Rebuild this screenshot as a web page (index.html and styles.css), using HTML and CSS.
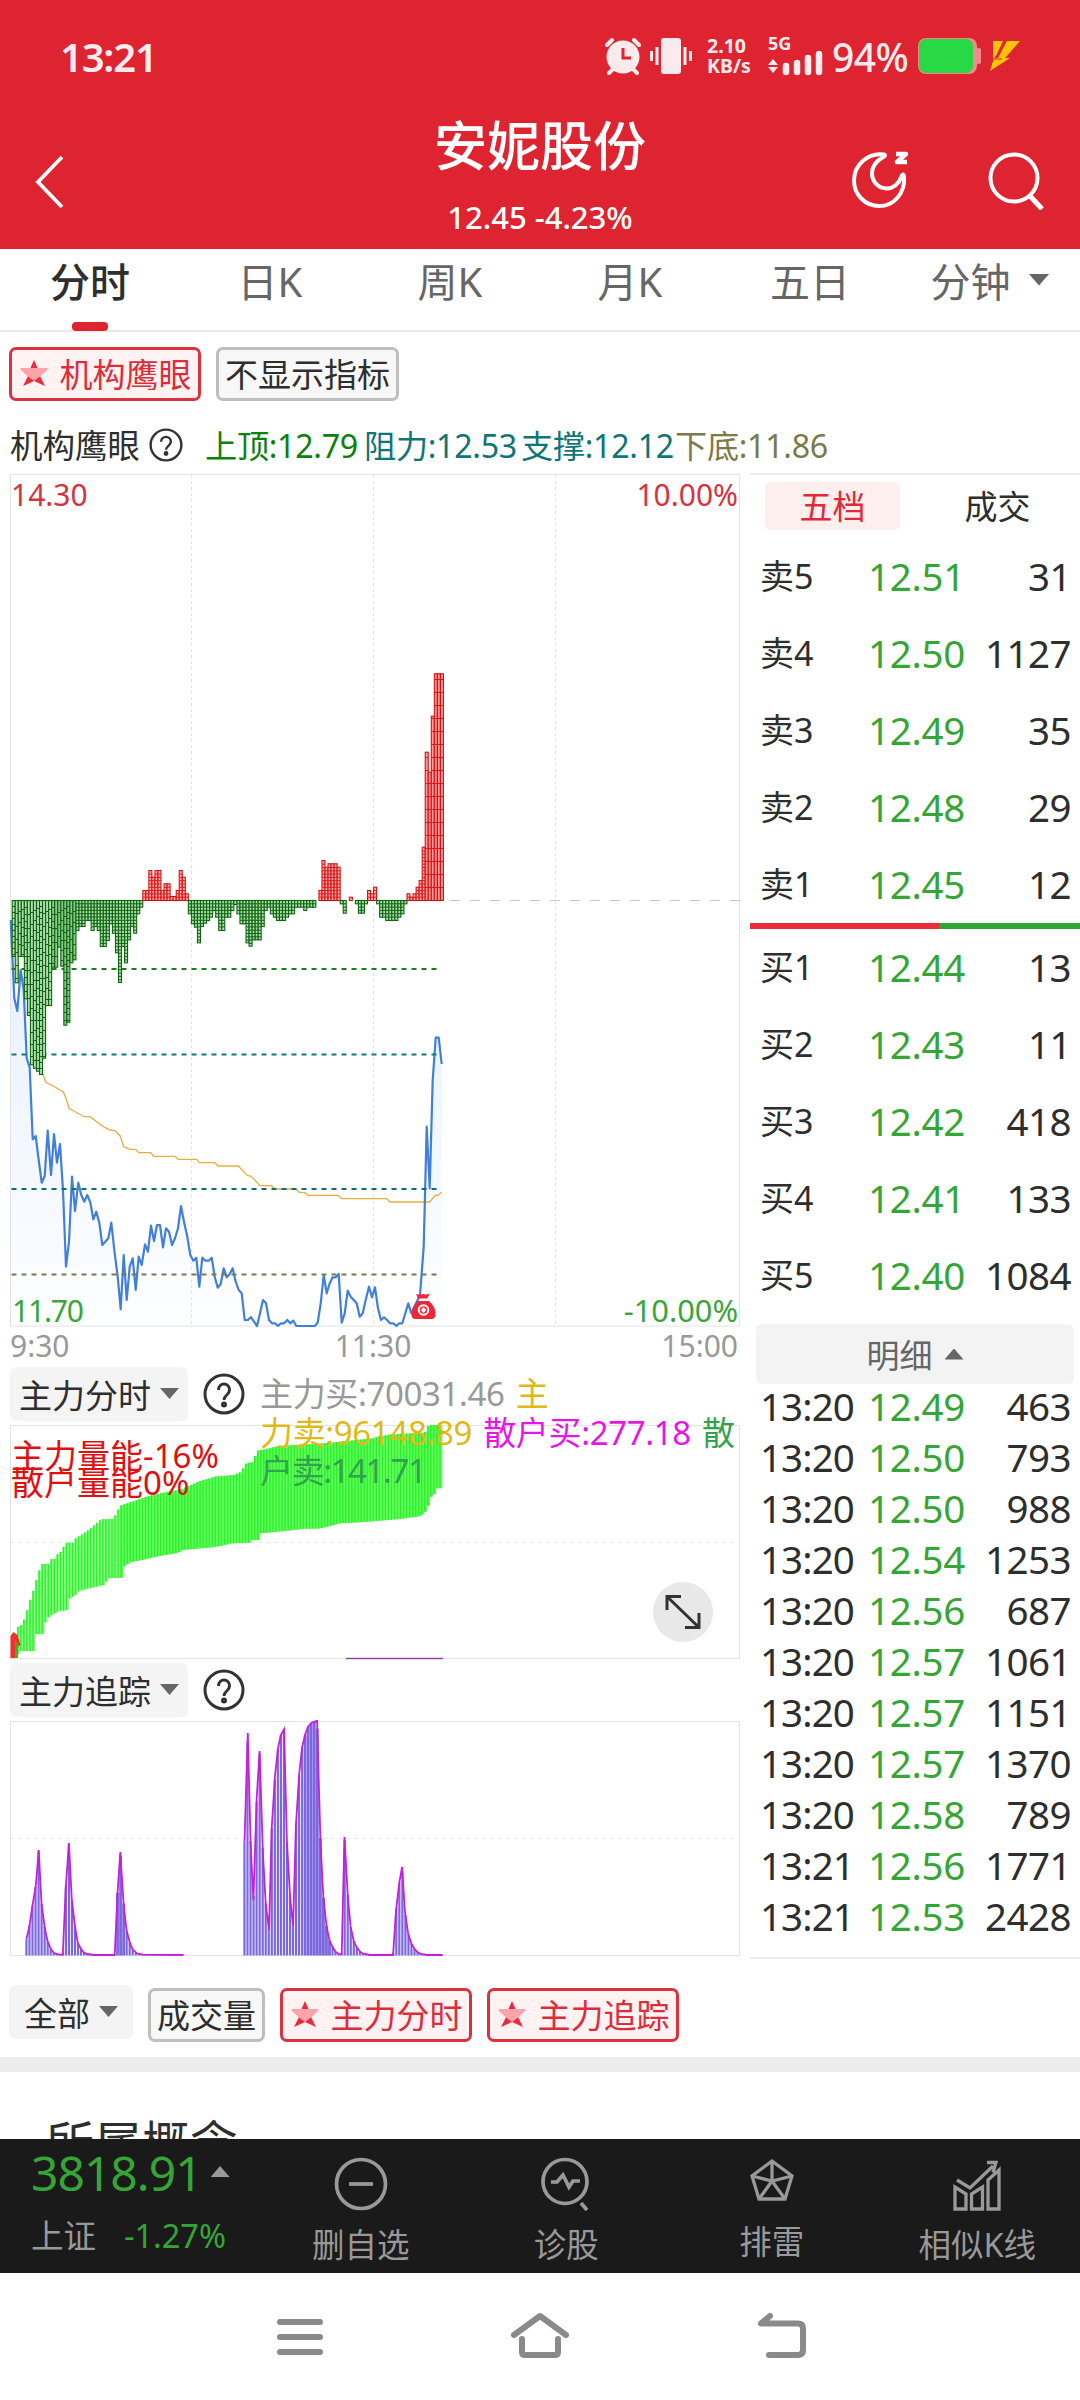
FILE: index.html
```html
<!DOCTYPE html>
<html lang="zh-CN">
<head>
<meta charset="utf-8">
<title>安妮股份</title>
<link rel="stylesheet" href="styles.css">
</head>
<body>
<header class="header">
  <div class="status">
    <span class="clock">13:21</span>
    <div class="status-icons">
      <svg class="s-alarm" width="38" height="38" viewBox="0 0 38 38"><g fill="none" stroke="#fcebec" stroke-width="4" stroke-linecap="round"><path d="M3 8l5-5M35 8l-5-5M5 36l4-4M33 36l-4-4"/></g><circle cx="19" cy="20" r="16.5" fill="#fcebec"/><path d="M19 11v10h8" fill="none" stroke="#dd2430" stroke-width="3"/></svg>
      <svg class="s-vibe" width="42" height="36" viewBox="0 0 42 36"><rect x="11" width="20" height="36" rx="3" fill="#fcebec"/><path d="M1.5 13v10M7 9v18M35 9v18M40.500 13v10" stroke="#fcebec" stroke-width="3"/></svg>
      <div class="speed"><span>2.10</span><span>KB/s</span></div>
      <div class="s-signal"><span class="fiveg">5G</span><svg width="56" height="25" viewBox="0 14 56 25"><path d="M0 28l5-6 5 6zM0 30l5 6 5-6z" fill="#fcebec"/><path d="M18 29v6M29 26v9M40 21v14M51 17v18" stroke="#fcebec" stroke-width="6.500" stroke-linecap="round"/></svg></div>
      <span class="pct">94%</span>
      <svg class="s-batt" width="63" height="36" viewBox="0 0 63 36"><rect width="59" height="36" rx="8" fill="#f08a90"/><rect x="58" y="10" width="5" height="16" rx="2" fill="#f08a90"/><rect x="1" y="1" width="54" height="34" rx="7" fill="#2ad846"/></svg>
      <svg class="s-bolt" width="30" height="30" viewBox="0 0 30 30"><path d="M3 0h10L6 15l-3 3zM17 0h13L15 17h5L0 30l4-13h4z" fill="#fdc309"/><path d="M2 18h10" stroke="#dd2430"/></svg>
    </div>
  </div>
  <div class="titlebar">
    <svg class="back" width="30" height="56" viewBox="0 0 30 56"><path d="M28 3L4 28l24 25" fill="none" stroke="#fff" stroke-width="3.800"/></svg>
    <div class="title"><h1>安妮股份</h1><p>12.45 -4.23%</p></div>
    <div class="actions">
      <svg width="60" height="60" viewBox="0 0 60 60"><path d="M34 4.500C18 2 4 15 4 30.500c0 14 11 25.500 25 25.500 15 0 26.500-13 25-29.500-.5-3-2-2-2.500 0C49 34 43 38.500 37 38.500c-9 0-15-7-15-15.500 0-7 4-12 12-16.500 1.500-1 1.200-1.800 0-2z" fill="none" stroke="#fff" stroke-width="4"/><path d="M46 4h10l-9 8h10" fill="none" stroke="#fff" stroke-width="4.500" stroke-linejoin="round"/></svg>
      <svg width="60" height="60" viewBox="0 0 60 60"><circle cx="28" cy="28" r="23.500" fill="none" stroke="#fff" stroke-width="4"/><path d="M44 46l12 13" stroke="#fff" stroke-width="5"/></svg>
    </div>
  </div>
</header>

<nav class="tabs">
  <span class="tab active">分时</span><span class="tab">日K</span><span class="tab">周K</span><span class="tab">月K</span><span class="tab">五日</span><span class="tab">分钟<i class="caret big"></i></span>
</nav>

<div class="chips top">
  <span class="chip on"><svg class="star" viewBox="0 0 28 28"><path d="M14 1l4 9h9l-7 7 5 10-11-5-11 5 5-10-7-7h9z" fill="#ed2a3a"/><path d="M1 9h26q1.500 1-1 3l-6 5.500-6 4.500-6-4.500L2 12Q-.5 10 1 9z" fill="#ffa3ab"/></svg>机构鹰眼</span>
  <span class="chip wide">不显示指标</span>
</div>

<div class="levels">
  <span class="name">机构鹰眼</span>
  <svg class="q" width="34" height="34" viewBox="0 0 42 42"><circle cx="21" cy="21" r="19" /><path d="M15 17c0-8 12-8 12 0 0 5-6 5-6 10"/><circle class="dot" cx="21" cy="31.500" r="1.500"/></svg>
  <span class="lv green">上顶:12.79</span><span class="lv teal">阻力:12.53</span><span class="lv teal">支撑:12.12</span><span class="lv olive">下底:11.86</span>
</div>

<main class="board">
  <section class="charts">
    <svg id="price" width="740" height="894" viewBox="0 473 740 894"></svg>
    <div class="selrow">
      <span class="select">主力分时<i class="caret"></i></span>
      <svg class="q" width="42" height="42" viewBox="0 0 42 42"><circle cx="21" cy="21" r="19"/><path d="M15.500 17c0-8 11-8 11 0 0 5-5.500 5-5.500 10"/><circle class="dot" cx="21" cy="31.500" r="1.500"/></svg>
      <div class="legend">
        <div><span class="gray">主力买:70031.46</span> <span class="gold">主</span></div>
        <div><span class="gold">力卖:96148.89</span> <span class="pink">散户买:277.18</span> <span class="leaf">散</span></div>
        <div><span class="leaf narrow">户卖:141.71</span></div>
      </div>
    </div>
    <div class="plot">
      <svg id="flow" width="740" height="242" viewBox="0 1421 740 242"></svg>
      <div class="energy"><div>主力量能-16%</div><div>散户量能0%</div></div>
      <div class="expand"><svg width="60" height="60" viewBox="0 0 60 60"><path d="M14 28V14.500h14M14 14.500l32 31M46 31v14.500H32" fill="none" stroke="#333" stroke-width="3"/></svg></div>
    </div>
    <div class="selrow">
      <span class="select">主力追踪<i class="caret"></i></span>
      <svg class="q" width="42" height="42" viewBox="0 0 42 42"><circle cx="21" cy="21" r="19"/><path d="M15.500 17c0-8 11-8 11 0 0 5-5.500 5-5.500 10"/><circle class="dot" cx="21" cy="31.500" r="1.500"/></svg>
    </div>
    <svg id="track" width="740" height="242" viewBox="0 1717 740 242"></svg>
  </section>

  <aside class="side">
    <div class="sidetabs"><span class="st active">五档</span><span class="st">成交</span></div>
    <div class="book">
      <div class="row"><b>卖5</b><em>12.51</em><i>31</i></div>
      <div class="row"><b>卖4</b><em>12.50</em><i>1127</i></div>
      <div class="row"><b>卖3</b><em>12.49</em><i>35</i></div>
      <div class="row"><b>卖2</b><em>12.48</em><i>29</i></div>
      <div class="row"><b>卖1</b><em>12.45</em><i>12</i></div>
    </div>
    <div class="ratio"><span></span></div>
    <div class="book">
      <div class="row"><b>买1</b><em>12.44</em><i>13</i></div>
      <div class="row"><b>买2</b><em>12.43</em><i>11</i></div>
      <div class="row"><b>买3</b><em>12.42</em><i>418</i></div>
      <div class="row"><b>买4</b><em>12.41</em><i>133</i></div>
      <div class="row"><b>买5</b><em>12.40</em><i>1084</i></div>
    </div>
    <div class="detail">明细<i class="caret up"></i></div>
    <div class="ticks">
      <div class="row"><b>13:20</b><em>12.49</em><i>463</i></div>
      <div class="row"><b>13:20</b><em>12.50</em><i>793</i></div>
      <div class="row"><b>13:20</b><em>12.50</em><i>988</i></div>
      <div class="row"><b>13:20</b><em>12.54</em><i>1253</i></div>
      <div class="row"><b>13:20</b><em>12.56</em><i>687</i></div>
      <div class="row"><b>13:20</b><em>12.57</em><i>1061</i></div>
      <div class="row"><b>13:20</b><em>12.57</em><i>1151</i></div>
      <div class="row"><b>13:20</b><em>12.57</em><i>1370</i></div>
      <div class="row"><b>13:20</b><em>12.58</em><i>789</i></div>
      <div class="row"><b>13:21</b><em>12.56</em><i>1771</i></div>
      <div class="row"><b>13:21</b><em>12.53</em><i>2428</i></div>
    </div>
  </aside>
</main>

<div class="chips bottom">
  <span class="select small">全部<i class="caret"></i></span>
  <span class="chip vol">成交量</span>
  <span class="chip on"><svg class="star" viewBox="0 0 28 28"><path d="M14 1l4 9h9l-7 7 5 10-11-5-11 5 5-10-7-7h9z" fill="#ed2a3a"/><path d="M1 9h26q1.500 1-1 3l-6 5.500-6 4.500-6-4.500L2 12Q-.5 10 1 9z" fill="#ffa3ab"/></svg>主力分时</span>
  <span class="chip on"><svg class="star" viewBox="0 0 28 28"><path d="M14 1l4 9h9l-7 7 5 10-11-5-11 5 5-10-7-7h9z" fill="#ed2a3a"/><path d="M1 9h26q1.500 1-1 3l-6 5.500-6 4.500-6-4.500L2 12Q-.5 10 1 9z" fill="#ffa3ab"/></svg>主力追踪</span>
</div>
<div class="divider"></div>
<div class="concept">所属概念</div>

<footer class="toolbar">
  <div class="index">
    <div class="idx-top">3818.91<i class="caret up light"></i></div>
    <div class="idx-sub"><span>上证</span><span class="chg">-1.27%</span></div>
  </div>
  <div class="tool"><svg width="54" height="54" viewBox="0 0 54 54"><circle cx="27" cy="27" r="24.500"/><path d="M15 27h24"/></svg><span>删自选</span></div>
  <div class="tool"><svg width="54" height="54" viewBox="0 0 54 54"><circle cx="26" cy="24.500" r="22"/><path d="M12 25h6l6-7 6 12 4-6h7M42 46l6 7"/></svg><span>诊股</span></div>
  <div class="tool high"><svg width="54" height="54" viewBox="0 0 54 54"><path d="M27 7L47 22l-7 23H14L7 22zM27 7v20M7 22l20 5 20-5M14 45l13-18 13 18" stroke-width="3.300"/></svg><span>排雷</span></div>
  <div class="tool"><svg width="54" height="54" viewBox="0 0 54 54"><path d="M5 52V30l11 7v15zM21.500 52V37l11-7v22zM38 52V23l11-10v39zM7 23l13 8L43 9M37 5.500h9l-3 10" stroke-width="3.300"/></svg><span>相似K线</span></div>
</footer>
<div class="sysnav">
  <svg width="48" height="44" viewBox="0 0 48 44"><path d="M4 10h40M4 25h40M4 40h40"/></svg>
  <svg width="60" height="48" viewBox="0 0 60 48"><path d="M4 23L30 4l26 19"/><path d="M12 27v13q0 3 3 3h30q3 0 3-3V27"/></svg>
  <svg width="50" height="48" viewBox="0 0 50 48"><path d="M14 4L5 11.500H42q5 0 5 5V38q0 5-5 5H13"/></svg>
</div>
<script src="charts.js"></script>
</body>
</html>
```
FILE: styles.css
```css
* { box-sizing: border-box; margin: 0; padding: 0; }
body { width: 1080px; height: 2400px; overflow: hidden; background: #fff; color: #2e2e2e; font-family: "Noto Sans", "Noto Sans CJK SC", sans-serif; font-size: 33px; }
svg { display: block; flex: none; }
i, em { font-style: normal; }
b { font-weight: 400; }

.header { height: 249px; background: #dd2430; color: #fff; }
.status { height: 112px; display: flex; justify-content: space-between; padding: 0 60px 0 60px; align-items: center; }
.clock { font-size: 40px; font-weight: 600; letter-spacing: -1.200px; color: #fcebec; }
.status-icons { display: flex; align-items: center; color: #fcebec; }
.s-vibe { margin-left: 8px; }
.speed { display: flex; flex-direction: column; margin-left: 15px; width: 46px; font-size: 19.500px; font-weight: 700; line-height: 20px; }
.s-signal { margin-left: 15px; width: 56px; padding-bottom: 2px; }
.fiveg { display: block; height: 17px; font-size: 18px; font-weight: 700; line-height: 19px; }
.pct { width: 80px; margin-left: 8px; font-size: 39px; font-weight: 500; letter-spacing: -0.500px; color: #fcebec; }
.s-batt { margin-left: 6px; }
.s-bolt { margin-left: 9px; }
.titlebar { height: 137px; display: grid; grid-template-columns: 300px 1fr 300px; }
.back { margin: 42px 0 0 34px; }
.title { text-align: center; }
.title h1 { font-size: 53px; font-weight: 500; line-height: 68px; }
.title p { font-size: 31px; font-weight: 500; line-height: 40px; margin-top: 17px; }
.actions { display: flex; gap: 76px; padding: 38px 0 0 70px; }

.tabs { height: 83px; display: grid; grid-template-columns: repeat(6, 180px); border-bottom: 2px solid #e9e9e9; }
.tab { height: 82px; display: flex; justify-content: center; align-items: center; padding-bottom: 21px; font-size: 40px; color: #666; position: relative; }
.tab.active { color: #2e2e2e; font-weight: 500; }
.tab.active::after { content: ""; position: absolute; left: 72px; bottom: 0; width: 36px; height: 9px; border-radius: 4px; background: #dd2430; }
.caret { width: 19px; height: 11px; background: #666; clip-path: polygon(0 0, 100% 0, 50% 100%); margin-left: 9px; flex: none; }
.caret.big { width: 21px; height: 12px; margin-left: 18px; }
.caret.up { clip-path: polygon(50% 0, 100% 100%, 0 100%); }

.chips { display: flex; padding-left: 9px; gap: 15px; }
.chips.top { height: 84px; padding-top: 15px; }
.chip { height: 54px; border: 3px solid #bebebe; border-radius: 7px; background: #f8f8f8; display: flex; align-items: center; justify-content: center; font-size: 33px; white-space: nowrap; padding-bottom: 2px; }
.chip.on { width: 192px; border-color: #d9333f; background: #fff2f3; color: #dc2d3a; gap: 12px; padding-left: 1px; }
.chip.wide { width: 183px; }
.chip.vol { width: 117px; }
.star { width: 28px; height: 28px; }

.levels { height: 57px; display: flex; align-items: center; padding-left: 10px; font-size: 32.500px; }
.levels > span { margin-top: -2px; }
.name { width: 139px; flex: none; }
.q { fill: none; stroke: #333; stroke-width: 3; }
.q .dot { fill: #333; }
.lv { width: 157px; letter-spacing: -0.300px; white-space: nowrap; font-size: 32.200px; }
.levels .green { margin-left: 22px; width: 159px; }
.green { color: #0a820a; }
.teal { color: #107575; }
.levels .teal + .teal { width: 154px; }
.olive { color: #7b7a48; }

.board { display: grid; grid-template-columns: 740px 330px; column-gap: 10px; height: 1485px; }
.selrow { height: 54px; display: flex; align-items: center; padding-left: 10px; position: relative; }
.select { width: 178px; height: 54px; border-radius: 7px; background: #f4f4f4; display: flex; align-items: center; justify-content: center; font-size: 33px; padding-bottom: 1px; }
.selrow .q { margin-left: 15px; }
.select.small { width: 124px; }
.legend { position: absolute; left: 260px; top: 8px; z-index: 2; font-size: 33px; line-height: 38.500px; white-space: nowrap; word-spacing: 3px; letter-spacing: -0.350px; }
.gray { color: #999; }
.gold { color: #dfba16; }
.pink { color: #e617e6; }
.leaf { color: #31a34e; }
.narrow { letter-spacing: -1.400px; }
.plot { position: relative; }
.energy { position: absolute; left: 11px; top: 21px; font-size: 33px; line-height: 27px; color: #e01010; white-space: nowrap; }
.expand { position: absolute; left: 653px; top: 161px; width: 60px; height: 60px; border-radius: 50%; background: #e8e8e8; }

.side { border-top: 2px solid #ececec; border-bottom: 2px solid #ececec; }
.sidetabs { height: 63px; display: flex; padding: 7px 15px 0; gap: 30px; }
.st { width: 135px; height: 48px; border-radius: 6px; text-align: center; line-height: 50px; font-size: 33px; }
.st.active { background: #fdefed; color: #e2293a; }
.row { display: grid; grid-template-columns: 108px 98px 1fr; padding: 0 9px 0 10px; font-size: 38.500px; }
.row em { color: #35a635; letter-spacing: -0.300px; }
.row i { text-align: right; letter-spacing: -0.500px; }
.book .row { height: 77px; line-height: 77px; }
.book b { font-size: 34px; }
.ratio { height: 6px; background: #2fa737; }
.ratio span { display: block; width: 189px; height: 6px; background: #ee2b38; }
.detail { margin: 10px 6px 0; height: 60px; border-radius: 6px; background: #f3f3f3; color: #666; display: flex; align-items: center; justify-content: center; font-size: 33px; }
.detail .caret { margin-left: 12px; }
.ticks .row { height: 51px; line-height: 50px; }
.ticks .row b { letter-spacing: -0.900px; }
.ticks { margin-top: -3px; }

.chips.bottom { height: 99px; padding-top: 30px; align-items: flex-start; }
.chips.bottom .select { margin-top: -3px; }
.divider { height: 15px; background: #ececec; }
.concept { height: 67px; overflow: hidden; padding: 36px 0 0 46px; font-size: 48px; line-height: 70px; }

.toolbar { height: 134px; background: #1a1a1a; display: grid; grid-template-columns: 258px repeat(4, 205.500px); color: #999; }
.idx-top { color: #35a635; font-size: 48px; line-height: 62px; padding: 3px 0 0 31px; display: flex; letter-spacing: -1px; }
.caret.light { background: #999; margin: 24px 0 0 9px; }
.idx-sub { display: flex; padding: 12px 0 0 31px; font-size: 32.500px; line-height: 40px; gap: 28px; }
.chg { color: #35a635; }
.tool { display: flex; flex-direction: column; align-items: center; padding-top: 18px; font-size: 32.500px; line-height: 40px; }
.tool svg { fill: none; stroke: #999; stroke-width: 3.700; margin-bottom: 14px; }
.tool.high { padding-top: 15px; }
.sysnav { height: 127px; display: flex; justify-content: center; align-items: flex-start; padding: 39px 0 0 2px; gap: 186px; }
.sysnav svg { fill: none; stroke: #8a8a8a; stroke-width: 6; stroke-linecap: round; stroke-linejoin: round; }

#price, #flow, #track { font-family: "Noto Sans", sans-serif; font-size: 30px; }
```
FILE: charts.js
```js
const STEP = 3.037, X0 = 12.2;
const make = (id, markup) => { document.getElementById(id).innerHTML = markup; };
const pairs = s => s.trim().split(/\s+/).map(p => p.split(',').map(Number));
const interp = (pts, x) => {
  for (let i = 1; i < pts.length; i++) {
    if (x <= pts[i][0]) {
      const [a, b] = pts[i - 1], [c, d] = pts[i];
      return b + (d - b) * Math.max(0, x - a) / (c - a || 1);
    }
  }
  return pts[pts.length - 1][1];
};

/* Intraday price panel */
const toPx = s => pairs(s).map(([x, y]) => (x / 3).toFixed(1) + ',' + (880 + y / 3).toFixed(1)).join(' ');
const price = toPx(`32,120 43,355 52,393 62,270 71,330 80,535 89,562 98,778 107,768 116,840 125,908 134,888 143,752 153,885 162,762 171,848 180,792 189,930 198,1160 207,1085 216,890 225,993 235,908 244,945 253,965 262,945 271,967 280,1018 289,995 298,1028 307,1095 316,1085 325,1075 334,1028 344,1120 353,1190 362,1288 371,1125 380,1260 389,1160 398,1135 407,1230 416,1130 425,1155 435,1093 444,1115 453,1037 462,1083 471,1035 480,1035 489,1102 498,1045 507,1055 516,1095 525,1075 534,1045 543,978 552,1025 562,1070 571,1125 580,1142 589,1133 598,1220 607,1133 616,1142 626,1142 635,1133 644,1190 653,1223 662,1212 671,1165 680,1192 689,1182 698,1165 707,1205 716,1230 725,1240 734,1320 744,1320 753,1311 762,1325 771,1338 780,1300 789,1260 798,1270 807,1320 816,1330 825,1330 834,1338 843,1330 852,1330 862,1320 871,1330 880,1322 889,1338 944,1338 953,1328 962,1270 971,1185 980,1240 989,1210 998,1192 1007,1192 1016,1182 1025,1328 1034,1300 1043,1232 1052,1250 1061,1260 1070,1270 1079,1310 1088,1300 1097,1260 1107,1220 1116,1252 1125,1222 1134,1285 1143,1320 1152,1312 1161,1320 1170,1330 1180,1330 1189,1338 1198,1330 1207,1330 1216,1300 1225,1270 1234,1300 1260,1245 1271,1100 1280,740 1289,925 1298,600 1307,473 1316,473 1325,552`);
const average = toPx(`32,120 60,297 72,298 100,400 128,580 137,607 160,618 180,630 190,635 198,655 207,685 220,692 253,710 270,710 307,738 330,750 345,752 360,767 371,800 390,808 407,808 416,818 452,818 462,829 525,829 535,838 590,838 598,848 645,848 654,858 715,858 743,887 753,888 780,917 815,917 825,927 888,927 898,937 915,938 925,946 1015,946 1025,956 1160,956 1170,966 1289,966 1305,947 1316,945 1325,937`);
/* positive = buying bar, negative = selling bar, one per minute, in thirds of a pixel */
const force = [-168,-247,-168,-168,-295,-345,-493,-503,-512,-522,-473,-315,-315,-200,-200,-140,-197,-374,-365,-187,-178,-90,-78,-78,-60,-60,-90,-78,-90,-138,-138,-120,-70,-98,-157,-246,-138,-187,-118,-78,-98,-40,-20,
30,30,90,70,90,90,30,50,50,12,12,30,90,70,20,
-40,-70,-80,-127,-78,-68,-60,-50,-30,-50,-90,-90,-50,-50,-30,-12,-40,-70,-70,-127,-137,-118,-118,-118,-78,-30,-20,-40,-50,-60,-60,-60,-50,-40,-40,-20,-20,-20,-30,-20,-20,-20,0,
30,120,100,110,110,110,100,-10,-38,0,10,0,-10,-38,-38,-10,30,20,40,-10,-50,-50,-60,-60,-60,-60,-50,-40,-10,20,10,20,40,60,160,445,385,553,680,680,680];
let bars = '';
force.forEach((v, k) => {
  if (!v) return;
  const x = X0 + k * STEP, h = Math.abs(v) / 3, up = v > 0;
  const y = up ? 900.5 - h : 900.5;
  const fill = up ? (h > 100 ? '#ff9a9a' : '#ffb0b0') : (k > 12 && k < 21 ? '#8cc68c' : '#b4dab4');
  bars += `<rect x="${x.toFixed(2)}" y="${y.toFixed(1)}" width="3" height="${h.toFixed(1)}" fill="${fill}" stroke="${up ? '#cc1414' : '#0b670b'}" stroke-width="1.100"/>`;
  const unit = up ? (h > 100 ? 13 : 3.3) : (k < 21 ? 6 + (k * 7 % 9) : 3.3);
  for (let d = unit; d < h - 1; d += unit) {
    const yy = (up ? 900.5 - d : 900.5 + d).toFixed(1);
    bars += `<path d="M${x.toFixed(2)} ${yy}h3" stroke="${up ? '#e81313' : '#0b670b'}"/>`;
  }
});
const guide = (y, c) => `<path d="M11.500 ${y}H438" stroke="${c}" stroke-width="2" stroke-dasharray="5 5"/>`;
make('price', `
<defs><linearGradient id="fade" x1="0" y1="0" x2="0" y2="1"><stop offset="0" stop-color="#e6f0ff"/><stop offset="1" stop-color="#fdfeff"/></linearGradient></defs>
<path d="M${price.replace(/ /g, 'L')}L441.700,1326L10.700,1326Z" fill="url(#fade)"/>
<rect x="10.500" y="474.500" width="729" height="851.500" fill="none" stroke="#e4e4e4"/>
<path d="M191.500 475V1326M373.500 475V1326M555.500 475V1326" stroke="#e2e2e2" stroke-dasharray="3 3"/>
<path d="M450 900.500H740" stroke="#c3c8ce" stroke-dasharray="10 10"/>
<polyline points="${average}" fill="none" stroke="#e5ae42" stroke-width="1.300"/>
<polyline points="${price}" fill="none" stroke="#407fdb" stroke-width="2.200" stroke-linejoin="round"/>
${guide(969, '#148214')}${guide(1054.500, '#147878')}${guide(1189, '#0f6e6e')}${guide(1274.500, '#7b7a48')}
${bars}
<g fill="#ee2737"><path d="M416 1294q4 1 7 0 3 1 7-.5l-3 5h-9z"/><path d="M418 1301h11q7 6 6.500 14-.5 4-4 4h-16q-4 0-4-4 0-8 6.500-14z"/><circle cx="423.500" cy="1310" r="4.800" stroke="#fff" stroke-width="2"/><path d="M423.500 1307l2.800 3-2.800 3-2.800-3z" fill="#fff"/></g>
<text x="11" y="506" fill="#d5343f">14.30</text><text x="738" y="506" text-anchor="end" fill="#d5343f">10.00%</text>
<text x="12" y="1322" fill="#3aa53a" letter-spacing="-1.200">11.70</text><text x="738" y="1322" text-anchor="end" fill="#3aa53a" font-size="30.800">-10.00%</text>
<g fill="#999"><text x="10" y="1357">9:30</text><text x="373" y="1357" text-anchor="middle">11:30</text><text x="738" y="1357" text-anchor="end">15:00</text></g>`);

/* Fund flow panel: one band bar per minute */
const SX = 2.119;
const upper = pairs(`36,800 42,800 48,790 55,765 61,732 70,695 80,645 88,612 104,612 106,597 118,597 120,585 132,572 138,548 155,548 160,535 172,525 190,507 215,477 240,477 255,437 280,425 310,410 350,397 385,388 420,365 455,350 495,345 512,335 518,312 537,305 543,273 560,268 590,258 680,250 700,248 740,242 790,235 800,230 830,223 900,218 908,195 938,195`);
const lower = pairs(`36,895 40,873 72,873 75,822 92,822 94,795 100,775 110,765 125,752 141,752 146,717 160,705 165,695 182,687 220,675 230,655 258,653 262,620 275,607 300,600 340,587 378,578 385,570 412,567 460,560 490,550 530,548 534,540 547,540 550,520 590,515 640,507 680,505 720,490 780,485 840,478 885,470 900,460 903,437 912,437 914,402 920,402 922,385 938,385`);
let band = '';
for (let k = 2; k < 142; k++) {
  const x = 11 + k * STEP, u = 1360 + interp(upper, (x + 1) * SX) / 3, l = 1360 + interp(lower, (x + 1) * SX) / 3;
  const lite = k < 36 ? '#8dff88' : '#62ff5c';
  band += `<rect x="${x.toFixed(2)}" y="${u.toFixed(1)}" width="3.100" height="${(l - u).toFixed(1)}" fill="${lite}"/><rect x="${x.toFixed(2)}" y="${u.toFixed(1)}" width="1.500" height="${(l - u).toFixed(1)}" fill="#2cf02c"/>`;
}
make('flow', `<rect x="10.500" y="1425.500" width="729" height="233" fill="none" stroke="#e4e4e4"/>
<path d="M11 1542.500H740" stroke="#e8e8e8" stroke-dasharray="3 5"/>${band}
<path d="M10.500 1658v-22l3-4 4 3 3 10-3 2v11z" fill="#f03030"/><path d="M15 1658v-18l3 4v14z" fill="#4faa20"/>
<path d="M346 1658.500h97" stroke="#8a4a9a" stroke-width="1.500"/>`);

/* Tracking panel: separate runs of spikes */
const runs = [`56,838 62,800 69,735 76,675 82,570 88,730 95,805 101,845 108,868 114,878 120,882 127,884 133,884 139,690 146,549 152,715 159,800 165,850 172,868 178,878 185,882 200,885 243,885 249,700 255,576 262,732 268,810 275,848 281,868 290,880 303,884 389,885`,
`518,545 525,219 531,550 537,720 544,415 550,273 557,580 563,730 570,810 576,500 583,345 589,265 595,225 602,208 608,545 615,715 621,800 627,497 634,342 640,263 647,222 653,200 659,190 666,185 672,183 679,540 685,710 692,800 698,840 705,862 711,875 718,882 724,883 730,531 737,710 743,800 750,845 756,862 763,875 770,881 785,885 833,885 839,755 846,670 852,621 858,755 865,822 872,852 879,868 886,878 893,882 905,885 938,885`];
let spikes = '';
runs.forEach(r => {
  const p = pairs(r), last = p[p.length - 1][0];
  for (let x = p[0][0]; x <= last; x += STEP * SX) {
    const y = 1660 + interp(p, x) / 3, solid = (x > 646 && x < 700) || (x > 246 && x < 266);
    spikes += `<path d="M${(x / SX).toFixed(2)} ${y.toFixed(1)}V1955.500" stroke="#7c68de" stroke-width="${solid ? 2.800 : 2.200}"/>`;
  }
  spikes += `<polyline points="${p.map(([x, y]) => (x / SX).toFixed(1) + ',' + (1660 + y / 3).toFixed(1)).join(' ')}" fill="none" stroke="#c420dc" stroke-width="1.800"/>`;
});
make('track', `<rect x="10.500" y="1721.500" width="729" height="234" fill="none" stroke="#e4e4e4"/>
<path d="M11 1838.500H740" stroke="#e8e8e8" stroke-dasharray="3 5"/>${spikes}`);
```
